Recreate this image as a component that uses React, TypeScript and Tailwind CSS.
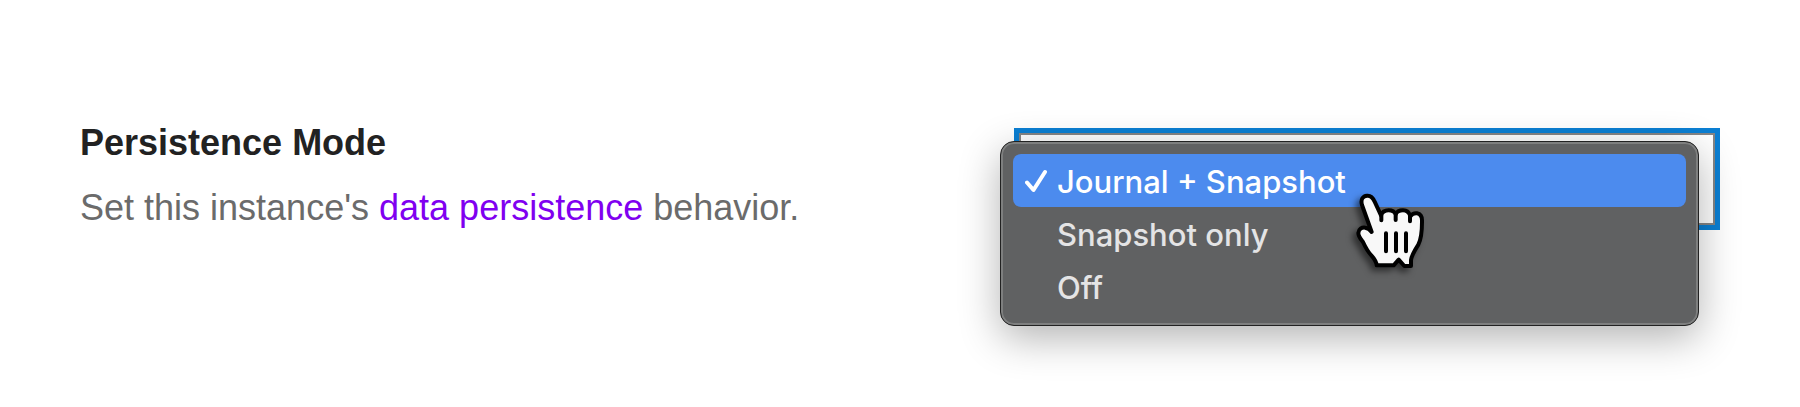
import { useState } from 'react';

const modes = ['Journal + Snapshot', 'Snapshot only', 'Off'];

const CheckIcon = () => (
  <svg viewBox="0 0 24 24" className="h-6 w-6" fill="none" aria-hidden="true">
    <path
      d="M2 13.5 L8.5 21 L20 3"
      stroke="#fff"
      strokeWidth="4"
      strokeLinecap="round"
      strokeLinejoin="round"
    />
  </svg>
);

const HandPointer = () => (
  <svg
    viewBox="60 36 225 250"
    className="pointer-events-none absolute top-[50px] left-[349px] w-[75px] overflow-visible drop-shadow-[-4px_4px_3px_rgba(0,0,0,0.5)]"
    aria-hidden="true"
  >
    <path
      d="M96 75 C91 58 99 48 111 47 C122 46 129 53 134 65 L153 106 C157 95 165 91 176 91 C186 91 194 96 197 103 C201 94 209 91 219 91 C230 91 238 98 241 109 C246 102 253 99 261 100 C272 102 277 111 276 126 C276 152 275 174 265 194 C253 213 245 225 243 240 L243 258 L223 258 L206 239 L191 256 L140 256 C139 243 133 236 124 226 C112 214 105 199 99 186 C92 177 85 170 85 159 C86 147 95 142 105 143 C114 144 120 149 125 156 Z"
      fill="#f8f8f8"
      stroke="#000"
      strokeWidth="12"
      strokeLinejoin="round"
    />
    <path
      d="M154 104 V121 M197 103 V120 M240 108 V124 M168 160 V214 M198 160 V214 M228 160 V214"
      fill="none"
      stroke="#000"
      strokeWidth="12"
      strokeLinecap="round"
    />
  </svg>
);

const PersistenceMode = () => {
  const [mode, setMode] = useState(modes[0]);

  return (
    <section className="flex items-start px-20 pt-32 pb-44 font-['Liberation_Sans',Arial,sans-serif]">
      <div className="flex-1">
        <label
          htmlFor="persistence-mode"
          className="block text-[36px] leading-[30px] font-bold text-[#222]"
        >
          Persistence Mode
        </label>
        <p className="mt-[26px] text-[36px] leading-12 text-[#6b6b6b]">
          Set this instance's{' '}
          <a href="#" className="text-[#8000f0]">
            data persistence
          </a>{' '}
          behavior.
        </p>
      </div>

      <div className="relative w-[43.05%]">
        <select
          id="persistence-mode"
          value={mode}
          onChange={(e) => setMode(e.target.value)}
          className="block h-[102px] w-full appearance-none border-5 border-[#0b7fd3] bg-white px-8 text-[31px] shadow-[inset_0_0_0_2px_#858585] outline-none"
        >
          {modes.map((m) => (
            <option key={m}>{m}</option>
          ))}
        </select>

        <div className="absolute top-[13px] right-[21px] -left-[14px] rounded-[14px] border border-[#222] bg-[#606162] p-3 font-[Inter,sans-serif] shadow-[inset_0_0_0_2px_#7e7f7f,0_12px_40px_rgba(0,0,0,0.3)]">
          {modes.map((m) => (
            <button
              key={m}
              type="button"
              onClick={() => setMode(m)}
              className={`flex h-[53px] w-full items-center rounded-lg pt-1 pl-3 text-left text-[31px] font-medium ${
                m === mode ? 'bg-[#4c8bee] text-white' : 'text-[#e4e4e5]'
              }`}
            >
              <span className="w-8 pb-1">{m === mode && <CheckIcon />}</span>
              {m}
            </button>
          ))}
          <HandPointer />
        </div>
      </div>
    </section>
  );
};

export default function App() {
  return (
    <main className="min-h-screen bg-white">
      <PersistenceMode />
    </main>
  );
}
